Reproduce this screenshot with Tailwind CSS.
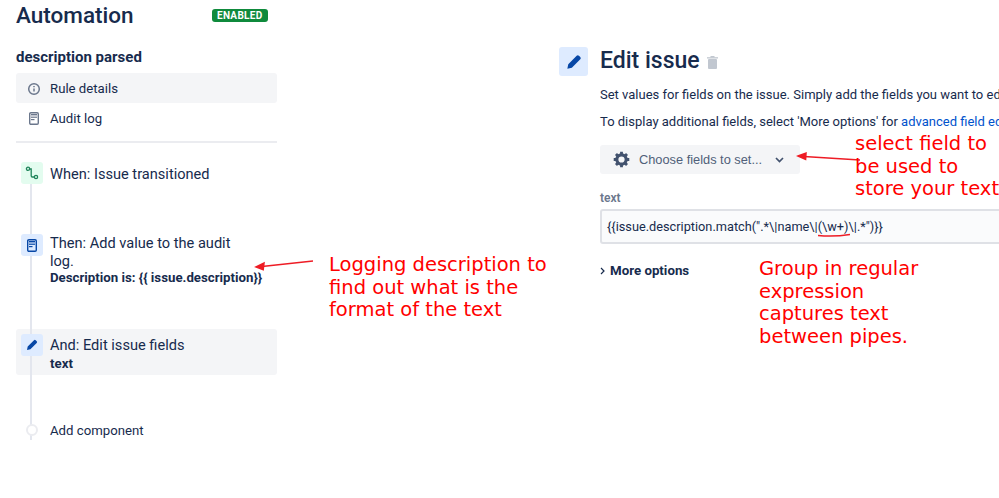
<!DOCTYPE html>
<html lang="en">
  <head>
    <meta charset="UTF-8" />
    <title>Automation</title>
    <script src="https://cdn.jsdelivr.net/npm/@tailwindcss/browser@4"></script>
  </head>
  <body class="bg-white text-[#172b4d] font-['Roboto',sans-serif] text-[13px]">
    <div class="relative w-[999px] h-[498px] overflow-hidden flex">
      <!-- left sidebar -->
      <aside class="w-[261px] ml-4 shrink-0">
        <div class="flex items-center h-[30px]">
          <h1 class="text-[22.5px] leading-[30px] font-medium w-[196px]">Automation</h1>
          <span class="bg-[#0f8a3c] text-white text-[10px] leading-[13px] font-bold px-[5px] rounded-[3px] tracking-[0.3px]">ENABLED</span>
        </div>
        <h2 class="mt-[17px] text-[15px] leading-[20px] font-bold">description parsed</h2>
        <ul class="mt-[6px] text-[13.2px]">
          <li class="flex items-center h-[30px] pt-[1px] bg-[#f4f5f7] rounded-[3px]">
            <span class="w-[34px] flex justify-center pl-[1px]">
              <svg class="w-[14px] h-[14px]" viewBox="0 0 14 14" fill="none" stroke="#6b778c" stroke-width="1.5"><circle cx="7" cy="7" r="5.3"/><path d="M7 6.4v3.2M7 4v1.2"/></svg>
            </span>
            Rule details
          </li>
          <li class="flex items-center h-[30px] pt-[1px]">
            <span class="w-[34px] flex justify-center pl-[1px]">
              <svg class="w-[10px] h-[13px]" viewBox="0 0 10 13"><rect x=".7" y=".7" width="8.6" height="11.6" rx="1.2" fill="none" stroke="#6b778c" stroke-width="1.4"/><rect x="2" y="2" width="6" height="1.4" fill="#6b778c"/><rect x="2" y="4.6" width="6" height="1.2" fill="#6b778c"/><rect x="2" y="7" width="3.5" height="1.2" fill="#6b778c"/></svg>
            </span>
            Audit log
          </li>
        </ul>
        <hr class="mt-[8px] border-0 h-[2px] bg-[#ebecf0]" />

        <div class="relative mt-[19px] text-[14.6px]">
          <div class="absolute left-[14px] top-[20px] w-[2px] h-[258px] bg-[#e3e6ee]"></div>

          <div class="relative flex h-[72px] pl-[5px]">
            <span class="w-[22px] h-[22px] rounded-[3px] bg-[#e3fcef] flex items-center justify-center shrink-0">
              <svg class="w-[14px] h-[14px]" viewBox="0 0 14 14" fill="none" stroke="#1f845a" stroke-width="1.3"><circle cx="3" cy="2.8" r="1.6"/><circle cx="11" cy="11" r="1.6"/><path d="M4.6 3h1.6v6.8q0 1.2 1.2 1.2H9.4"/></svg>
            </span>
            <p class="ml-[7px] mt-[1px] leading-[22px]">When: Issue transitioned</p>
          </div>

          <div class="relative flex h-[95px] pl-[5px]">
            <span class="w-[22px] h-[22px] rounded-[3px] bg-[#deebff] flex items-center justify-center shrink-0">
              <svg class="w-[10px] h-[13px]" viewBox="0 0 10 13"><rect x=".7" y=".7" width="8.6" height="11.6" rx="1.2" fill="none" stroke="#0747a6" stroke-width="1.4"/><rect x="2" y="2" width="6" height="1.4" fill="#0747a6"/><rect x="2" y="4.6" width="6" height="1.2" fill="#0747a6"/><rect x="2" y="7" width="3.5" height="1.2" fill="#0747a6"/></svg>
            </span>
            <div class="ml-[7px]">
              <p class="leading-[18px] w-[190px]">Then: Add value to the audit log.</p>
              <p class="text-[13.25px] leading-[15px] font-bold whitespace-nowrap">Description is: {{ issue.description}}</p>
            </div>
          </div>

          <div class="flex h-[46px] pl-[5px] pt-[5px] bg-[#f4f5f7] rounded-[3px]">
            <span class="relative w-[22px] h-[22px] rounded-[3px] bg-[#deebff] flex items-center justify-center shrink-0">
              <svg class="w-[12px] h-[12px]" viewBox="0 0 12 12"><path d="M8 1.3a1.2 1.2 0 0 1 1.7 0l1 1a1.2 1.2 0 0 1 0 1.7L4.4 10.3 1 11l.7-3.4z" fill="#0747a6"/></svg>
            </span>
            <div class="ml-[7px]">
              <p class="leading-[22px]">And: Edit issue fields</p>
              <p class="text-[13.25px] leading-[16px] font-bold">text</p>
            </div>
          </div>

          <div class="relative flex items-center mt-[45px] h-[20px] pl-[10px] text-[13.2px]">
            <span class="w-[12px] h-[12px] rounded-full border-2 border-[#ebecf0] bg-white shrink-0"></span>
            <p class="ml-[12px] pt-[1px]">Add component</p>
          </div>
        </div>
      </aside>

      <!-- edit issue panel -->
      <section class="ml-[282px] mt-[47px] w-[460px] shrink-0">
        <div class="flex">
          <span class="w-[29px] h-[29px] rounded-[3px] bg-[#deebff] flex items-center justify-center shrink-0">
            <svg class="w-[16px] h-[16px]" viewBox="0 0 12 12"><path d="M8 1.3a1.2 1.2 0 0 1 1.7 0l1 1a1.2 1.2 0 0 1 0 1.7L4.4 10.3 1 11l.7-3.4z" fill="#0747a6"/></svg>
          </span>
          <div class="ml-[12px] min-w-0">
            <div class="flex items-center h-[28px]">
              <h2 class="text-[23px] leading-[28px] font-medium">Edit issue</h2>
              <svg class="ml-[7px] mt-[3px] w-[11px] h-[13px]" viewBox="0 0 11 13" fill="#c1c7d0"><rect x="1" y="3" width="9" height="10" rx="1"/><rect x="0" y="1.2" width="11" height="1.3"/><rect x="3.5" y="0" width="4" height="1.5"/></svg>
            </div>
            <p class="mt-[10px] leading-[20px] whitespace-nowrap text-[13px]">Set values for fields on the issue. Simply add the fields you want to edit</p>
            <p class="mt-[7px] leading-[20px] whitespace-nowrap text-[13px]">To display additional fields, select 'More options' for <span class="text-[#0052cc]">advanced field editing</span></p>
            <button class="mt-[13px] flex items-center w-[200px] h-[29px] bg-[#f4f5f7] rounded-[3px] text-[#505f79] font-['Liberation_Sans',sans-serif] text-[12.8px]">
              <svg class="ml-[13px] w-[17px] h-[17px]" viewBox="0 0 24 24" fill="none" stroke="#42526e" stroke-width="4.4"><circle cx="12" cy="12" r="6.6"/><path stroke-width="4" d="M12 1v4M12 19v4M1 12h4M19 12h4M4.2 4.2l2.9 2.9M16.9 16.9l2.9 2.9M4.2 19.8l2.9-2.9M16.9 7.1l2.9-2.9"/></svg>
              <span class="ml-[9px]">Choose fields to set...</span>
              <svg class="ml-[13px] w-[9px] h-[6px]" viewBox="0 0 9 6" fill="none" stroke="#42526e" stroke-width="1.7"><path d="M1 1l3.5 3.5L8 1"/></svg>
            </button>
            <label class="block mt-[16px] text-[12px] leading-[16px] font-semibold text-[#6b778c]">text</label>
          </div>
        </div>
        <div class="ml-[41px] mt-[3px] w-[420px] h-[35px] border-2 border-[#dfe1e6] bg-[#fafbfc] rounded-[3px] pl-[5px] leading-[32px] whitespace-nowrap text-[12.75px]">{{issue.description.match(".*\|name\|(\w+)\|.*")}}</div>
        <div class="ml-[41px] mt-[17px] flex items-center h-[20px] font-bold text-[13.3px]">
          <svg class="w-[5px] h-[8px]" viewBox="0 0 5 8" fill="none" stroke="#172b4d" stroke-width="1.2"><path d="M1 1l3 3-3 3"/></svg>
          <span class="ml-[5px]">More options</span>
        </div>
      </section>

      <!-- red annotations drawn on top of the screenshot -->
      <svg class="absolute inset-0 w-[999px] h-[498px]" viewBox="0 0 999 498" fill="none" stroke="#ee1c25" stroke-width="1.5">
        <path d="M313 261L262 266.5"/>
        <path d="M256 267l8-4-.8 6.6z" fill="#ee1c25"/>
        <path d="M860 160L804 156.5"/>
        <path d="M798 156l8-3 -.4 6.4z" fill="#ee1c25"/>
        <path d="M818 235.5q16 1.5 32-1"/>
      </svg>
      <div class="absolute left-[329px] top-[254px] text-[#ff0000] font-['DejaVu_Sans',sans-serif] text-[19.5px] leading-[22.5px] whitespace-nowrap">Logging description to<br />find out what is the<br />format of the text</div>
      <div class="absolute left-[855px] top-[133px] text-[#ff0000] font-['DejaVu_Sans',sans-serif] text-[19.5px] leading-[22.5px] whitespace-nowrap">select field to<br />be used to<br />store your text</div>
      <div class="absolute left-[759px] top-[258px] text-[#ff0000] font-['DejaVu_Sans',sans-serif] text-[19.5px] leading-[22.5px] whitespace-nowrap">Group in regular<br />expression<br />captures text<br />between pipes.</div>
    </div>
  </body>
</html>
